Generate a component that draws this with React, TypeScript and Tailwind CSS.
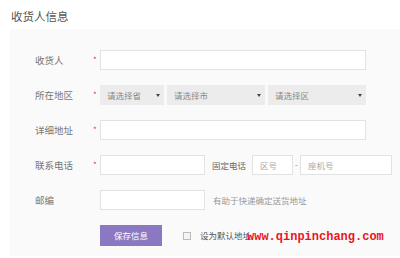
const font = { fontFamily: '"Noto Sans CJK SC", "Noto Sans", sans-serif' };

function Label({ text, required }: { text: string; required?: boolean }) {
  return (
    <div className="flex w-[65px] shrink-0 items-center">
      <span className="w-[58px] text-[9.5px] text-[#777]">{text}</span>
      {required && <span className="text-[8px] leading-none text-[#e0334f]">*</span>}
    </div>
  );
}

function Select({ text, width }: { text: string; width: string }) {
  return (
    <div className={`flex h-[20px] items-center justify-between bg-[#ececec] pl-[7px] pr-[4px] ${width}`}>
      <span className="text-[8.5px] text-[#888]">{text}</span>
      <span className="h-0 w-0 border-x-[2.5px] border-t-[3px] border-x-transparent border-t-[#444]" />
    </div>
  );
}

export default function App() {
  return (
    <div className="relative h-[258px] w-[400px] overflow-hidden bg-white" style={font}>
      <h2 className="pl-[11px] pt-[8px] text-[11.5px] leading-[16px] text-[#555]">收货人信息</h2>

      <div className="ml-[10px] mt-[5px] flex h-[227px] flex-col gap-[15px] bg-[#fafafa] pl-[25px] pt-[21px]">
        <div className="flex items-center">
          <Label text="收货人" required />
          <div className="h-[20px] w-[266px] border border-[#e2e2e2] bg-white" />
        </div>

        <div className="flex items-center">
          <Label text="所在地区" required />
          <div className="flex gap-[3px]">
            <Select text="请选择省" width="w-[64px]" />
            <Select text="请选择市" width="w-[98px]" />
            <Select text="请选择区" width="w-[98px]" />
          </div>
        </div>

        <div className="flex items-center">
          <Label text="详细地址" required />
          <div className="h-[20px] w-[266px] border border-[#e2e2e2] bg-white" />
        </div>

        <div className="flex items-center">
          <Label text="联系电话" required />
          <div className="h-[20px] w-[105px] border border-[#e2e2e2] bg-white" />
          <span className="ml-[7px] w-[40px] text-[8.5px] text-[#666]">固定电话</span>
          <div className="flex h-[20px] w-[41px] items-center border border-[#e2e2e2] bg-white pl-[7px] text-[8.5px] text-[#aaa]">
            区号
          </div>
          <span className="w-[7px] text-center text-[8px] text-[#888]">-</span>
          <div className="flex h-[20px] w-[92px] items-center border border-[#e2e2e2] bg-white pl-[7px] text-[8.5px] text-[#aaa]">
            座机号
          </div>
        </div>

        <div className="flex items-center">
          <Label text="邮编" />
          <div className="h-[20px] w-[105px] border border-[#e2e2e2] bg-white" />
          <span className="ml-[8px] text-[8.5px] text-[#999]">有助于快递确定送货地址</span>
        </div>

        <div className="flex items-center">
          <div className="w-[65px] shrink-0" />
          <button className="h-[21px] w-[62px] bg-[#8b78c2] text-[8.5px] text-white">保存信息</button>
          <span className="ml-[21px] h-[8px] w-[8px] border border-[#bbb] bg-[#f4f4f4]" />
          <span className="ml-[9px] text-[8.5px] text-[#555]">设为默认地址</span>
        </div>
      </div>

      {/* 水印 */}
      <span
        className="absolute left-[247px] top-[229px] text-[12px] font-semibold leading-[16px] text-[#e8161e]"
        style={{ fontFamily: '"Liberation Mono", monospace' }}
      >
        www.qinpinchang.com
      </span>
    </div>
  );
}
